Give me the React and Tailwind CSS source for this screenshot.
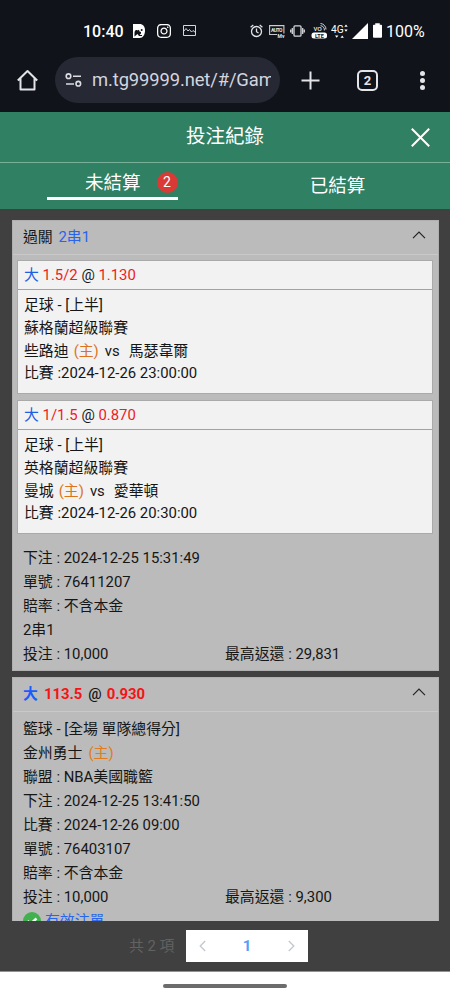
import { FaInstagram } from "react-icons/fa";

const legs = [
  {
    id: "leg-1",
    line: "1.5/2",
    odds: "1.130",
    market: "足球 - [上半]",
    league: "蘇格蘭超級聯賽",
    home: "些路迪",
    away: "馬瑟韋爾",
    time: "2024-12-26 23:00:00",
  },
  {
    id: "leg-2",
    line: "1/1.5",
    odds: "0.870",
    market: "足球 - [上半]",
    league: "英格蘭超級聯賽",
    home: "曼城",
    away: "愛華頓",
    time: "2024-12-26 20:30:00",
  },
];

function StatusBar() {
  return (
    <div className="flex h-[48px] items-start pt-[21px] pl-[83px] text-white">
      <span className="w-[41px] text-[16px] leading-[21px] font-medium">10:40</span>
      <svg className="mt-[3px] ml-[9px] h-[14px] w-[12px] shrink-0" viewBox="0 0 12 14">
        <path d="M0 0h6.500c3.500 0 5.500 2.500 5.500 6.500S10 14 6.500 14H0z" fill="#fff" />
        <path d="M1.500 9c0-2.500 1.500-3.500 3-2.500l1.500-.7.500 1.700L8 8v1.500L6.500 11H9v1H6L4.500 10 1.500 12.500z" fill="#10131a" />
        <circle cx="8.700" cy="6" r="1" fill="#10131a" />
      </svg>
      <FaInstagram className="mt-[2px] ml-[11px] h-[16px] w-[16px] shrink-0" />
      <svg className="mt-[4px] ml-[11px] h-[11px] w-[13px] shrink-0" viewBox="0 0 13 11" fill="none" stroke="#d5d7dc" strokeWidth="1">
        <path d="M.5.5h12v10H.5zM.5 6.500l2.500-3 2 2.500 1.500-1.500 2 2.500 1.500-1.500 2.500 2" />
      </svg>

      <svg className="mt-[3px] ml-[54px] h-[14px] w-[13px] shrink-0" viewBox="0 0 13 14" fill="none" stroke="#e3e4e8" strokeWidth="1.300">
        <circle cx="6.500" cy="7.500" r="5" />
        <path d="M6.500 4.500v3.200l2 1.300M.6 3.200 3.300 1M12.400 3.200 9.700 1" />
      </svg>
      <svg className="mt-[4px] ml-[6px] h-[13px] w-[16px] shrink-0" viewBox="0 0 16 13">
        <path d="M8 9.500H.6V.6h14.300v8" fill="none" stroke="#c9cbd0" strokeWidth="1.100" />
        <text x="2" y="7.200" fontSize="5" fontWeight="700" fill="#e3e4e8" textLength="11.500">AUTO</text>
        <text x="8.500" y="12.600" fontSize="5" fontWeight="700" fill="#e3e4e8">My</text>
      </svg>
      <svg className="mt-[4px] ml-[5px] h-[12px] w-[15px] shrink-0" viewBox="0 0 15 12" fill="none" stroke="#d5d7dc" strokeWidth="1.300">
        <rect x="4" y=".8" width="7" height="10.400" rx="1" />
        <path d="M2.300 3v6M.7 4.500v3M12.700 3v6M14.300 4.500v3" />
      </svg>
      <svg className="mt-[1px] ml-[6px] h-[17px] w-[17px] shrink-0" viewBox="0 0 17 17">
        <text x="2.500" y="9" fontSize="8" fill="#fff">vo</text>
        <path d="M9.500 3.700a4 4 0 0 1 3.800 4.800M9.500 1.500a6 6 0 0 1 5.500 6" fill="none" stroke="#d5d7dc" strokeWidth="1" />
        <rect x=".5" y="10.500" width="15.500" height="6" rx="2.500" fill="#fff" />
        <text x="4" y="15.500" fontSize="5.500" fontWeight="700" fill="#10131a">LTE</text>
      </svg>
      <svg className="mt-[1px] ml-[3px] h-[17px] w-[18px] shrink-0" viewBox="0 0 18 17">
        <text x="0" y="11.300" fontSize="10.200" fill="#fff">4G</text>
        <path d="m13.300 4.700 1.700-2.200 1.700 2.200zM13.300 7.500l1.700 2.200 1.700-2.200zM4 13.500h3.400l-1.700 2.300zM9.500 15.800h3.400l-1.700-2.300z" fill="#fff" />
      </svg>
      <svg className="mt-[2px] ml-[3px] h-[16px] w-[16px] shrink-0" viewBox="0 0 16 16">
        <path d="M16 0v16H0z" fill="#fff" />
      </svg>
      <svg className="mt-[2px] ml-[5px] h-[15px] w-[9px] shrink-0" viewBox="0 0 10 16">
        <path d="M2.500 0h5v1.500H9a1 1 0 0 1 1 1V15a1 1 0 0 1-1 1H1a1 1 0 0 1-1-1V2.500a1 1 0 0 1 1-1h1.500z" fill="#fff" />
      </svg>
      <span className="ml-[4px] text-[16px] leading-[21px]">100%</span>
    </div>
  );
}

function BrowserBar() {
  return (
    <div className="flex h-[64px] items-center">
      <svg className="ml-[17px] h-[22px] w-[21px] shrink-0" viewBox="0 0 21 22" fill="none" stroke="#e3e4e8" strokeWidth="2">
        <path d="M.8 11.500 10.500 2l9.700 9.500M3.500 9.500V20.500h14V9.500" strokeLinejoin="round" />
      </svg>
      <div className="ml-[17px] flex h-[46px] w-[225px] shrink-0 items-center rounded-full bg-[#262833] pl-[10px]">
        <svg className="h-[14px] w-[17px] shrink-0" viewBox="0 0 17 14" fill="none" stroke="#dcdde3" strokeWidth="1.600">
          <circle cx="3.500" cy="3.200" r="2.300" />
          <path d="M8 3.200h8M1 11h8" />
          <circle cx="13.300" cy="10.700" r="2.300" />
        </svg>
        <span className="ml-[10px] w-[179px] overflow-hidden text-[18.400px] leading-7 tracking-[-0.120px] whitespace-nowrap text-[#d3d5df]">
          m.tg99999.net/#/Gam
        </span>
      </div>
      <svg className="ml-[21px] h-[19px] w-[19px] shrink-0" viewBox="0 0 19 19" stroke="#e3e4e8" strokeWidth="2">
        <path d="M9.500.5v18M.5 9.500h18" />
      </svg>
      <div className="ml-[37px] flex h-[21px] w-[21px] shrink-0 items-center justify-center rounded-[5px] border-2 border-[#e3e4e8] text-[13px] leading-none font-bold text-[#e3e4e8]">
        2
      </div>
      <div className="ml-[42px] flex flex-col gap-[2px]">
        <span className="h-[5px] w-[5px] rounded-full bg-[#e3e4e8]" />
        <span className="h-[5px] w-[5px] rounded-full bg-[#e3e4e8]" />
        <span className="h-[5px] w-[5px] rounded-full bg-[#e3e4e8]" />
      </div>
    </div>
  );
}

function ChevronUp() {
  return (
    <svg className="mb-[5px] h-[8px] w-[14px]" viewBox="0 0 14 8" fill="none" stroke="#222" strokeWidth="1.200">
      <path d="m1 7.200 6-6 6 6" />
    </svg>
  );
}

function Leg({ leg }) {
  return (
    <div className="h-[134px] border border-[#aaaaaa] bg-[#f2f2f2]">
      <div className="h-[29px] border-b border-[#a2a2a2] pl-[6px] leading-[28px]">
        <span className="text-[#1d5fe0]">大</span> <span className="text-[#ee1c25]">{leg.line}</span> @{" "}
        <span className="text-[#ee1c25]">{leg.odds}</span>
      </div>
      <div className="pt-[4px] pl-[6px] leading-[22.800px]">
        <p>{leg.market}</p>
        <p>{leg.league}</p>
        <p>
          {leg.home}
          <span className="mr-[6px] ml-[5px] text-[#dc741c]">(主)</span>vs
          <span className="ml-[9px]">{leg.away}</span>
        </p>
        <p>比賽 :{leg.time}</p>
      </div>
    </div>
  );
}

function Stake({ amount, payout }) {
  return (
    <div className="flex">
      <p className="w-[202px]">投注 : {amount}</p>
      <p>最高返還 : {payout}</p>
    </div>
  );
}

export default function App() {
  return (
    <div
      className="flex h-[1000px] w-[450px] flex-col overflow-hidden bg-white text-[14.880px] text-[#161616]"
      style={{ fontFamily: "Roboto, 'Noto Sans CJK TC', sans-serif" }}
    >
      <header className="h-[112px] shrink-0 bg-[#10131a]">
        <StatusBar />
        <BrowserBar />
      </header>

      {/* Title */}
      <div className="flex h-[51px] shrink-0 items-center border-b border-[#78b09a] bg-[#308064] text-white">
        <h1 className="w-full pl-[186px] text-[19.500px] leading-7">投注紀錄</h1>
        <svg className="mr-[20px] h-[19px] w-[19px] shrink-0" viewBox="0 0 19 19" stroke="#fff" strokeWidth="2">
          <path d="m.8.800 17.400 17.400M18.200.8.800 18.200" />
        </svg>
      </div>

      {/* Tabs */}
      <div className="flex h-[46px] shrink-0 bg-[#308064] text-[18.500px] text-white">
        <div className="flex w-[225px] justify-center">
          <div className="flex h-[37px] w-[131px] items-center border-b-[3px] border-white pt-[4px] pl-[38px]">
            <span className="pt-[1px] leading-7">未結算</span>
            <span className="ml-[16px] flex h-[21px] w-[21px] items-center justify-center rounded-full bg-[#d93a36] text-[14px] leading-none">
              2
            </span>
          </div>
        </div>
        <div className="w-[225px] text-center leading-[46px]">已結算</div>
      </div>

      <main className="flex h-[763px] shrink-0 flex-col border-b border-[#929292] bg-[#404040] pt-[11px]">
        <div className="mx-[12px] flex h-[701px] w-[427px] shrink-0 flex-col gap-[6px] overflow-hidden">
          {/* Parlay */}
          <section className="h-[451px] shrink-0 border border-[#b0b0b0] bg-[#bbbbbb]">
            <div className="flex h-[34px] items-center justify-between border-b border-[#c9c9c9] pr-[12px] pl-[10px]">
              <span>
                過關 <span className="ml-[2px] text-[#2864ee]">2串1</span>
              </span>
              <ChevronUp />
            </div>
            <div className="flex flex-col gap-[6px] pt-[5px] pr-[5px] pl-[4px]">
              {legs.map((leg) => (
                <Leg key={leg.id} leg={leg} />
              ))}
            </div>
            <div className="pt-[12px] pl-[10px] leading-[24px]">
              <p>下注 : 2024-12-25 15:31:49</p>
              <p>單號 : 76411207</p>
              <p>賠率 : 不含本金</p>
              <p>2串1</p>
              <Stake amount="10,000" payout="29,831" />
            </div>
          </section>

          {/* Single bet */}
          <section className="h-[280px] shrink-0 border border-[#b0b0b0] bg-[#bbbbbb]">
            <div className="flex h-[34px] items-center justify-between border-b border-[#c9c9c9] pr-[12px] pl-[10px]">
              <span className="font-bold">
                <span className="text-[#1a5cff]">大</span>
                <span className="mx-[6px] text-[#f51414]">113.5</span>
                <span className="font-medium">@</span>
                <span className="ml-[5px] text-[#f51414]">0.930</span>
              </span>
              <ChevronUp />
            </div>
            <div className="pt-[5px] pl-[10px] leading-[24px]">
              <p>籃球 - [全場 單隊總得分]</p>
              <p>
                金州勇士<span className="ml-[6px] text-[#e07b20]">(主)</span>
              </p>
              <p>聯盟 : NBA美國職籃</p>
              <p>下注 : 2024-12-25 13:41:50</p>
              <p>比賽 : 2024-12-26 09:00</p>
              <p>單號 : 76403107</p>
              <p>賠率 : 不含本金</p>
              <Stake amount="10,000" payout="9,300" />
              <p className="flex items-center text-[#2864ee]">
                <svg className="mr-[4px] h-[18px] w-[18px]" viewBox="0 0 18 18">
                  <circle cx="9" cy="9" r="9" fill="#40b14c" />
                  <path d="m4.500 9 3 3 6-5.500" fill="none" stroke="#fff" strokeWidth="2.500" />
                </svg>
                有效注單
              </p>
            </div>
          </section>
        </div>

        {/* Pagination */}
        <div className="flex pt-[9px] pl-[129px]">
          <span className="w-[57px] text-[14.800px] leading-[32px] whitespace-nowrap text-[#626262]">共 2 項</span>
          <div className="flex h-[32px] w-[122px] items-center justify-between bg-white px-[13px]">
            <svg className="h-[12px] w-[7px]" viewBox="0 0 7 12" fill="none" stroke="#c4c7cd" strokeWidth="1.300">
              <path d="M6.200 1 1.200 6l5 5" />
            </svg>
            <span className="text-[15px] font-bold text-[#559df5]">1</span>
            <svg className="h-[12px] w-[7px]" viewBox="0 0 7 12" fill="none" stroke="#c4c7cd" strokeWidth="1.300">
              <path d="m.8 1 5 5-5 5" />
            </svg>
          </div>
        </div>
      </main>

      <footer className="flex h-[28px] shrink-0 justify-center pt-[12px]">
        <div className="h-[4px] w-[124px] rounded-full bg-[#6c6c6c]" />
      </footer>
    </div>
  );
}
